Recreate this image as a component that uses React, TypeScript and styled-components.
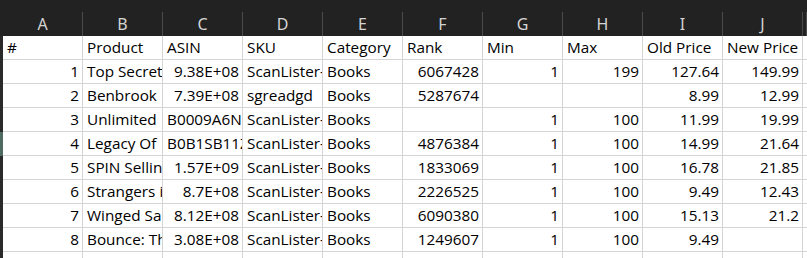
import React from "react";
import styled, { createGlobalStyle } from "styled-components";

const Global = createGlobalStyle`
  html, body { margin: 0; padding: 0; background: #ffffff; }
  body { overflow: hidden; }
`;

const Sheet = styled.div`
  width: 807px;
  height: 258px;
  overflow: hidden;
  background: #ffffff;
  display: flex;
  flex-direction: column;
`;

const HeaderBar = styled.div`
  flex: none;
  height: 36px;
  background: #222222;
  display: flex;
  flex-direction: column;
`;

const TopStrip = styled.div`
  height: 12px;
  flex: none;
`;

const LetterRow = styled.div`
  height: 24px;
  display: flex;
`;

const Corner = styled.div`
  width: 3px;
  flex: none;
`;

const ColHead = styled.div<{ $partial?: boolean }>`
  box-sizing: border-box;
  width: ${(p) => (p.$partial ? "auto" : "80px")};
  flex: ${(p) => (p.$partial ? "1" : "none")};
  border-right: 1px solid #4a4a4a;
  color: #d4d4d4;
  font-family: "Noto Sans", "Open Sans", sans-serif;
  font-size: 16px;
  line-height: 24px;
  text-align: center;
`;

const Row = styled.div`
  display: flex;
  height: 24px;
  flex: none;
`;

const RowStub = styled.div<{ $selected?: boolean }>`
  width: 3px;
  flex: none;
  background: ${(p) => (p.$selected ? "#4e6a61" : "#2a2a2a")};
`;

const Cell = styled.div<{ $align?: "left" | "right"; $partial?: boolean }>`
  box-sizing: border-box;
  width: ${(p) => (p.$partial ? "auto" : "80px")};
  flex: ${(p) => (p.$partial ? "1" : "none")};
  height: 24px;
  border-right: 1px solid #d4d4d4;
  border-bottom: 1px solid #d4d4d4;
  overflow: hidden;
  white-space: nowrap;
  text-overflow: clip;
  font-family: "Open Sans", Lato, sans-serif;
  font-size: 15.3px;
  line-height: 23px;
  color: #000000;
  text-align: ${(p) => (p.$align === "right" ? "right" : "left")};
  padding: ${(p) => (p.$align === "right" ? "0 3px 0 0" : "0 0 0 4px")};
`;

const letters = ["A", "B", "C", "D", "E", "F", "G", "H", "I", "J"];

const headers = ["#", "Product", "ASIN", "SKU", "Category", "Rank", "Min", "Max", "Old Price", "New Price"];

type R = (string | number | null)[];

const rows: R[] = [
  [1, "Top Secret Restaurant Recipes", "9.38E+08", "ScanLister-1001", "Books", 6067428, 1, 199, "127.64", "149.99"],
  [2, "Benbrook", "7.39E+08", "sgreadgd", "Books", 5287674, null, null, "8.99", "12.99"],
  [3, "Unlimited", "B0009A6NKW", "ScanLister-1003", "Books", null, 1, 100, "11.99", "19.99"],
  [4, "Legacy Of", "B0B1SB11ZQ", "ScanLister-1004", "Books", 4876384, 1, 100, "14.99", "21.64"],
  [5, "SPIN Selling", "1.57E+09", "ScanLister-1005", "Books", 1833069, 1, 100, "16.78", "21.85"],
  [6, "Strangers in Their Own Land", "8.7E+08", "ScanLister-1006", "Books", 2226525, 1, 100, "9.49", "12.43"],
  [7, "Winged Sandals", "8.12E+08", "ScanLister-1007", "Books", 6090380, 1, 100, "15.13", "21.2"],
  [8, "Bounce: The Myth of Talent", "3.08E+08", "ScanLister-1008", "Books", 1249607, 1, 100, "9.49", null],
];

const isRight = (v: string | number | null, col: number) =>
  typeof v === "number" || (col === 2 && typeof v === "string" && v.includes("E+")) || col >= 8;

export default function App() {
  return (
    <>
      <Global />
      <Sheet>
        <HeaderBar>
          <TopStrip />
          <LetterRow>
            <Corner />
            {letters.map((l) => (
              <ColHead key={l}>{l}</ColHead>
            ))}
            <ColHead $partial />
          </LetterRow>
        </HeaderBar>
        <Row>
          <RowStub />
          {headers.map((h) => (
            <Cell key={h}>{h}</Cell>
          ))}
          <Cell $partial />
        </Row>
        {rows.map((r, i) => (
          <Row key={i}>
            <RowStub $selected={i === 3} />
            {r.map((v, c) => (
              <Cell key={c} $align={isRight(v, c) ? "right" : "left"}>
                {v ?? ""}
              </Cell>
            ))}
            <Cell $partial />
          </Row>
        ))}
        <Row>
          <RowStub />
          {letters.map((l) => (
            <Cell key={l} />
          ))}
          <Cell $partial />
        </Row>
      </Sheet>
    </>
  );
}
